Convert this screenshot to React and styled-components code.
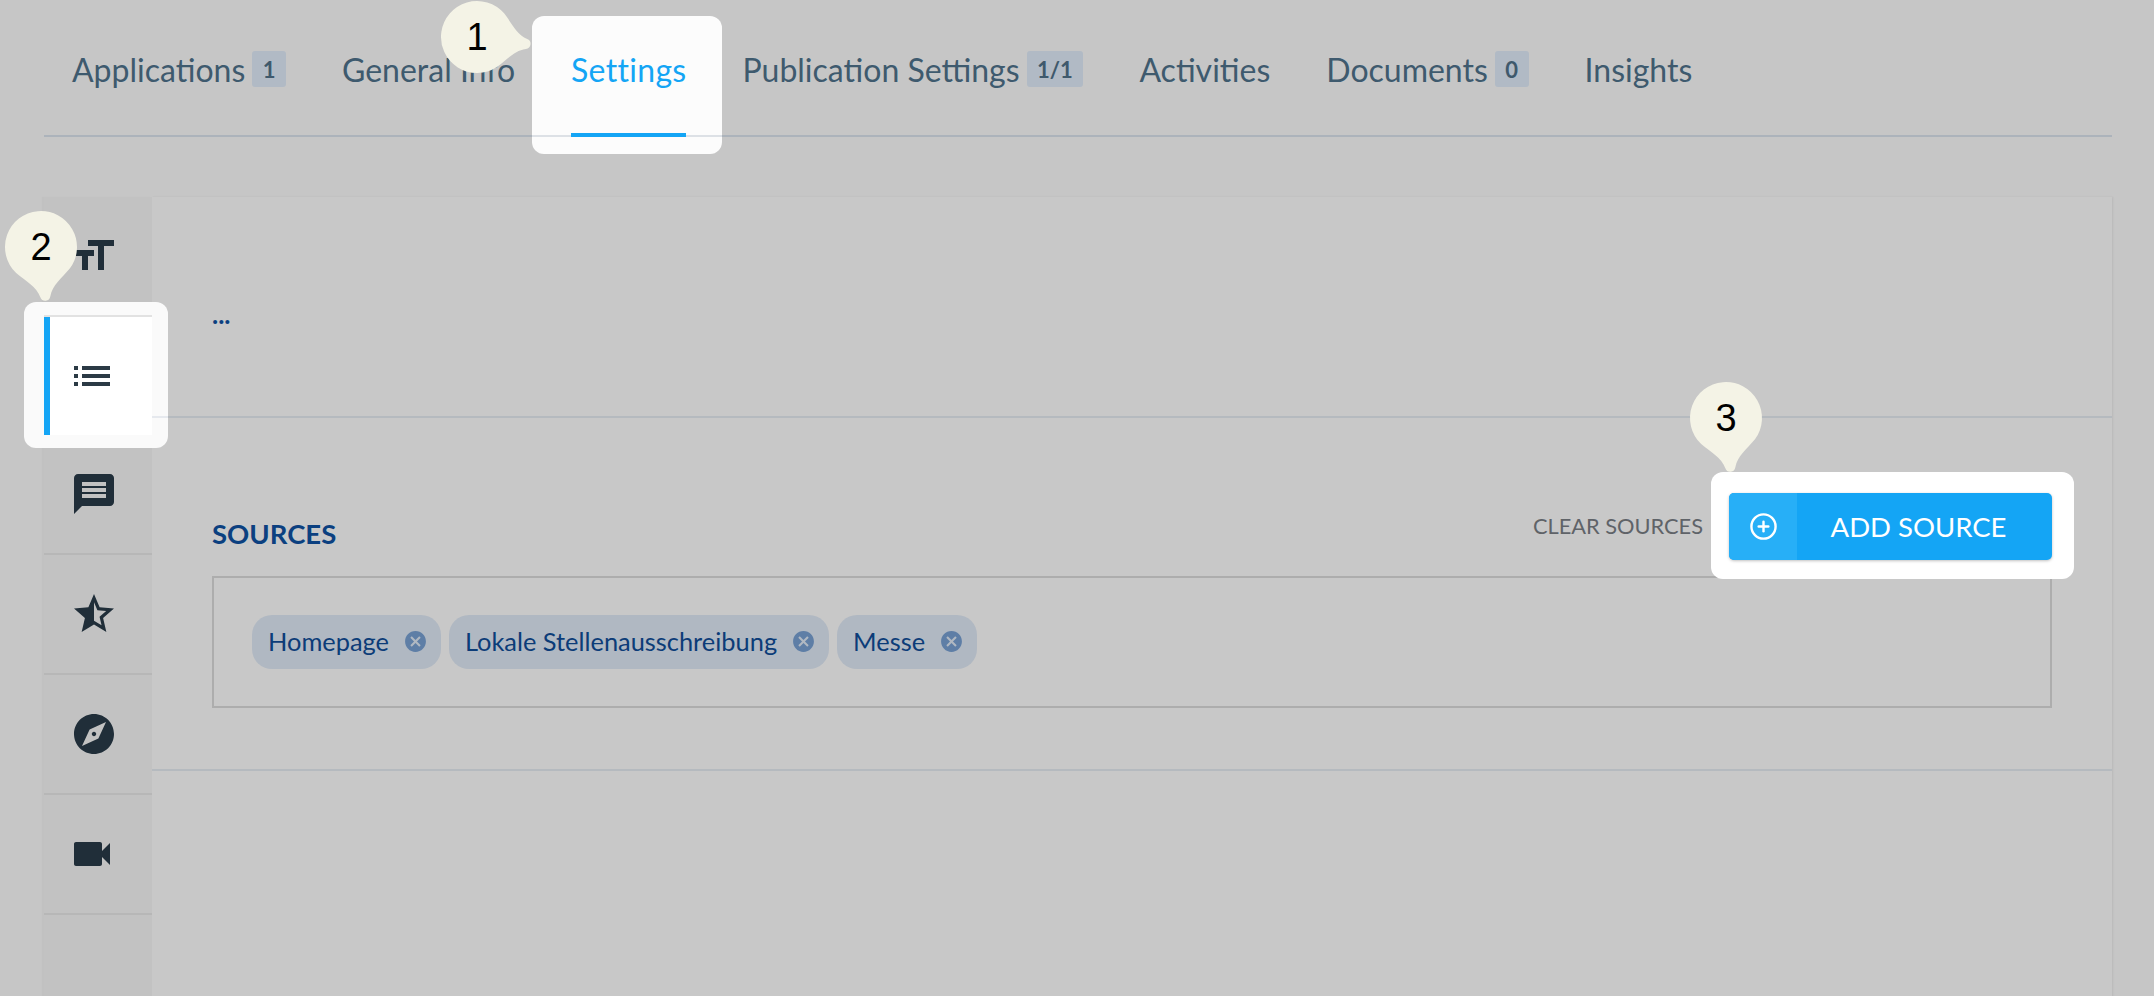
import React from 'react';
import styled, { createGlobalStyle } from 'styled-components';
import { CirclePlus } from 'lucide-react';
import {
  MdFormatSize,
  MdList,
  MdMessage,
  MdStarHalf,
  MdExplore,
  MdVideocam,
  MdCancel,
} from 'react-icons/md';

const GlobalStyle = createGlobalStyle`
  html, body {
    margin: 0;
    padding: 0;
    height: 996px;
    overflow: hidden;
    background: #c6c6c6;
    font-family: 'Lato', sans-serif;
  }
  * {
    box-sizing: border-box;
  }
`;

const Page = styled.div`
  padding: 0 42px 0 44px;
  height: 996px;
  overflow: hidden;
`;

const TabBar = styled.nav`
  display: flex;
  height: 137px;
  padding-top: 20px;
  border-bottom: 2px solid #acb3bb;
`;

const Tab = styled.div`
  position: relative;
  z-index: ${(p) => (p.$active ? 1 : 0)};
  display: flex;
  align-items: center;
  gap: 7px;
  height: 115px;
  padding: 0 28px 17px;
  font-size: 32px;
  letter-spacing: ${(p) => (p.$active ? '0.3px' : '0')};
  color: ${(p) => (p.$active ? '#14a5f5' : '#3e5a6e')};
`;

const TabLabel = styled.span`
  position: relative;
  z-index: 1;
`;

const Count = styled.span`
  display: block;
  height: 36px;
  padding: 0 10.5px;
  border-radius: 3px;
  background: #b1bac5;
  color: #3f596c;
  font-size: 22px;
  font-weight: 700;
  line-height: 37px;
`;

const Spot = styled.div`
  position: absolute;
  top: ${(p) => p.$top}px;
  right: ${(p) => p.$right}px;
  bottom: ${(p) => p.$bottom}px;
  left: ${(p) => p.$left}px;
  border-radius: 12px;
  background: ${(p) => p.$bg || '#fcfcfc'};
`;

const TabLine = styled.div`
  position: absolute;
  left: 0;
  right: 0;
  bottom: 17px;
  height: 2px;
  background: #dde1e6;
`;

const Underline = styled.div`
  position: absolute;
  left: 28px;
  right: 28px;
  bottom: -2px;
  height: 4px;
  background: #14a5f5;
`;

const Shell = styled.div`
  display: flex;
  margin-top: 60px;
  height: 900px;
`;

const Sidebar = styled.aside`
  position: relative;
  z-index: 2;
  flex: 0 0 108px;
  background: #c2c2c2;
  box-shadow: -2px 0 1px rgba(0, 0, 0, 0.025);
`;

const SideItem = styled.div`
  display: flex;
  align-items: center;
  height: 120px;
  padding-left: 26px;
  border-bottom: 2px solid #b7b7b7;
  color: #202e39;
  svg {
    margin-left: ${(p) => p.$nudge || 0}px;
  }
`;

const ActiveItem = styled.div`
  position: relative;
  height: 118px;
`;

const SpotDivider = styled.div`
  position: absolute;
  top: 114px;
  right: 0;
  width: 16px;
  height: 2px;
  background: #e6e9ee;
`;

const ActiveFace = styled.div`
  position: relative;
  display: flex;
  align-items: center;
  height: 100%;
  padding-left: 18px;
  border-left: 6px solid #14a5f5;
  background: #fff;
  box-shadow: 0 -2px 0 #e2e2e2;
  color: #2b3a45;
`;

const Panel = styled.main`
  flex: 1;
  background: #c8c8c8;
  box-shadow: 1px 0 2px rgba(0, 0, 0, 0.07);
`;

const Section = styled.section`
  padding: 0 60px;
  border-bottom: 2px solid #b5babf;
`;

const Intro = styled(Section)`
  height: 221px;
  padding-top: 105px;
  color: #0b4080;
  font-size: 26px;
  font-weight: 700;
  line-height: 24px;
`;

const Sources = styled(Section)`
  padding-top: 75px;
  padding-bottom: 61px;
`;

const SourcesHeader = styled.div`
  display: flex;
  align-items: center;
  height: 67px;
  margin-bottom: 16px;
`;

const Title = styled.h2`
  flex: 1;
  margin: 14px 0 0;
  color: #0b4080;
  font-size: 27.5px;
  font-weight: 700;
`;

const ClearLink = styled.span`
  margin: -3px 26px 0 0;
  color: #5f6368;
  font-size: 21.8px;
`;

const ButtonWrap = styled.div`
  position: relative;
  z-index: 1;
`;

const AddButton = styled.button`
  position: relative;
  display: flex;
  width: 323px;
  height: 67px;
  padding: 0;
  border: none;
  border-radius: 5px;
  overflow: hidden;
  background: #14a5f5;
  box-shadow: 0 1px 3px rgba(0, 0, 0, 0.25);
  color: #fff;
  font-family: inherit;
  font-size: 27.5px;
`;

const ButtonIcon = styled.span`
  display: flex;
  align-items: center;
  justify-content: center;
  flex: 0 0 68px;
  background: #27aff7;
`;

const ButtonText = styled.span`
  flex: 1;
  padding-right: 12px;
  line-height: 67px;
  text-align: center;
`;

const TagBox = styled.div`
  display: flex;
  gap: 8px;
  height: 132px;
  padding: 37px 38px;
  border: 2px solid #adadad;
`;

const Tag = styled.div`
  display: flex;
  align-items: center;
  gap: 14px;
  height: 54px;
  padding: 0 13px 2px 16px;
  border-radius: 20px;
  background: #b0b8c2;
  color: #0c3c78;
  font-size: 25.4px;
`;

const TagClose = styled.span`
  display: flex;
  color: #5e7ea6;
`;

const Pin = styled.div`
  position: absolute;
  z-index: 3;
  top: ${(p) => p.$top}px;
  left: ${(p) => p.$left}px;
  display: flex;
  align-items: center;
  justify-content: center;
  width: 72px;
  height: 72px;
  color: #000;
  font-family: 'Liberation Sans', sans-serif;
  font-size: 38px;
  letter-spacing: 0;
  svg {
    position: absolute;
    top: 0;
    left: 0;
    overflow: visible;
    transform: rotate(${(p) => p.$turn}deg);
    transform-origin: 36px 36px;
  }
  span {
    position: relative;
  }
`;

function Marker({ n, top, left, turn }) {
  return (
    <Pin $top={top} $left={left} $turn={turn}>
      <svg width="72" height="72" viewBox="0 0 72 72">
        <path
          fill="#f4f3e6"
          d="M36 0a36 36 0 0 1 27 59.8C54 69 44 75 41 86q-1 4-5 4t-5-4C28 75 18 69 9 59.8A36 36 0 0 1 36 0z"
        />
      </svg>
      <span>{n}</span>
    </Pin>
  );
}

const tabs = [
  { label: 'Applications', count: '1' },
  { label: 'General Info' },
  { label: 'Settings', active: true },
  { label: 'Publication Settings', count: '1/1' },
  { label: 'Activities' },
  { label: 'Documents', count: '0' },
  { label: 'Insights' },
];

const sources = ['Homepage', 'Lokale Stellenausschreibung', 'Messe'];

export default function App() {
  return (
    <Page>
      <GlobalStyle />
      <TabBar>
        {tabs.map((tab) => (
          <Tab key={tab.label} $active={tab.active}>
            {tab.active && (
              <>
                <Spot $top={-4} $right={-8} $bottom={-19} $left={-11}>
                  <TabLine />
                </Spot>
                <Underline />
                <Marker n="1" top={-19} left={-102} turn={-82} />
              </>
            )}
            <TabLabel>{tab.label}</TabLabel>
            {tab.count && <Count>{tab.count}</Count>}
          </Tab>
        ))}
      </TabBar>
      <Shell>
        <Sidebar>
          <SideItem>
            <MdFormatSize size={48} />
          </SideItem>
          <ActiveItem>
            <Spot $top={-15} $right={-16} $bottom={-13} $left={-20} $bg="#fafafa">
              <SpotDivider />
            </Spot>
            <ActiveFace>
              <MdList size={48} />
            </ActiveFace>
            <Marker n="2" top={-106} left={-39} turn={-5} />
          </ActiveItem>
          <SideItem>
            <MdMessage size={48} />
          </SideItem>
          <SideItem>
            <MdStarHalf size={48} />
          </SideItem>
          <SideItem>
            <MdExplore size={48} />
          </SideItem>
          <SideItem $nudge={-2}>
            <MdVideocam size={48} />
          </SideItem>
        </Sidebar>
        <Panel>
          <Intro>...</Intro>
          <Sources>
            <SourcesHeader>
              <Title>SOURCES</Title>
              <ClearLink>CLEAR SOURCES</ClearLink>
              <ButtonWrap>
                <Spot $top={-21} $right={-22} $bottom={-19} $left={-18} $bg="#fff" />
                <AddButton>
                  <ButtonIcon>
                    <CirclePlus size={29} strokeWidth={2} />
                  </ButtonIcon>
                  <ButtonText>ADD SOURCE</ButtonText>
                </AddButton>
                <Marker n="3" top={-111} left={-39} turn={-5} />
              </ButtonWrap>
            </SourcesHeader>
            <TagBox>
              {sources.map((source) => (
                <Tag key={source}>
                  {source}
                  <TagClose>
                    <MdCancel size={25} />
                  </TagClose>
                </Tag>
              ))}
            </TagBox>
          </Sources>
        </Panel>
      </Shell>
    </Page>
  );
}
